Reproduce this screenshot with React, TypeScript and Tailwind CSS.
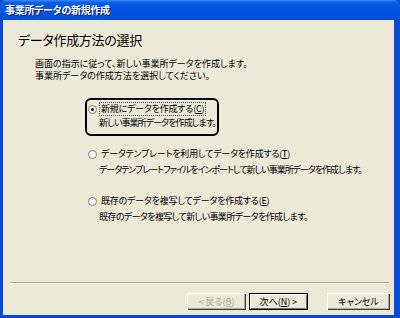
const jp = "font-['Noto_Sans_CJK_JP','Noto_Sans',sans-serif] [font-feature-settings:'palt']";

function Radio({ checked }: { checked?: boolean }) {
  return (
    <span className="w-[9px] h-[9px] rounded-full border border-[#7f7d76] bg-white flex items-center justify-center shrink-0">
      {checked && <span className="w-[3px] h-[3px] rounded-full bg-black" />}
    </span>
  );
}

function Option({
  label,
  k,
  desc,
  checked,
  descTrack = "tracking-[-0.6px]",
}: {
  label: string;
  k: string;
  desc: string;
  checked?: boolean;
  descTrack?: string;
}) {
  return (
    <div>
      <div className="flex items-center gap-[3px] h-[12px]">
        <Radio checked={checked} />
        <span
          className={`tracking-[-0.2px] px-[1px] leading-[12px] ${checked ? "outline outline-1 outline-dotted outline-[#555]" : ""}`}
        >
          {label}(<span className="underline">{k}</span>)
        </span>
      </div>
      <div className={`pl-[11px] h-[12px] leading-[12px] whitespace-nowrap ${descTrack} ${checked ? "mt-[2px]" : "mt-[4px]"}`}>
        {desc}
      </div>
    </div>
  );
}

function Button({ children, variant }: { children: React.ReactNode; variant?: "default" | "disabled" }) {
  const base = "h-[17px] flex items-center justify-center text-[9px] bg-[#ece9d8]";
  if (variant === "default")
    return (
      <div className={`${base} border border-black shadow-[inset_1px_1px_#fff,inset_-1px_-1px_#716f64]`}>
        {children}
      </div>
    );
  return (
    <div
      className={`${base} shadow-[inset_1px_1px_#fff,inset_-1px_-1px_#404040,inset_-2px_-2px_#aca899] ${variant === "disabled" ? "text-[#aca899]" : "text-black"}`}
    >
      {children}
    </div>
  );
}

export default function App() {
  return (
    <div className={`w-[400px] h-[318px] flex flex-col bg-[#0a49d6] ${jp}`}>
      {/* Title bar */}
      <div className="h-[20px] shrink-0 flex items-center pl-[5px] rounded-t-[6px] bg-[linear-gradient(180deg,#3d8bf7_0%,#0a5ee8_12%,#0054e3_45%,#0050e0_80%,#0a4ad0_100%)]">
        <span className="text-white font-bold text-[10px] tracking-[-0.3px] leading-none [text-shadow:1px_1px_#0a1e6e]">
          事業所データの新規作成
        </span>
      </div>

      {/* Body */}
      <div className="flex-1 flex flex-col ml-[3px] mr-[6px] mb-[3px] bg-[#ece9d8] text-black">
        <div className="flex-1">
          <div className="mt-[12px] ml-[15px] text-[13px] tracking-[-0.3px] leading-[16px]">データ作成方法の選択</div>
          <div className="mt-[10px] ml-[32px] text-[9px] leading-[12px]">
            <div>画面の指示に従って、新しい事業所データを作成します。</div>
            <div>事業所データの作成方法を選択してください。</div>
          </div>

          <div className="text-[9px]">
            <div className="mt-[16px] ml-[82px] w-[134px] border-2 border-black rounded-[6px] pl-[1px] pt-[3px] pb-[5px]">
              <Option
                checked
                label="新規にデータを作成する"
                k="C"
                descTrack="tracking-[-0.9px]"
                desc="新しい事業所データを作成します。"
              />
            </div>
            <div className="mt-[12px] ml-[85px]">
              <Option
                label="データテンプレートを利用してデータを作成する"
                k="T"
                descTrack="tracking-[-1px]"
                desc="データテンプレートファイルをインポートして新しい事業所データを作成します。"
              />
            </div>
            <div className="mt-[19px] ml-[85px]">
              <Option
                label="既存のデータを複写してデータを作成する"
                k="E"
                desc="既存のデータを複写して新しい事業所データを作成します。"
              />
            </div>
          </div>
        </div>

        {/* Footer */}
        <div className="ml-[7px] mr-[5px] h-[2px] border-t border-[#aca899] border-b border-b-white" />
        <div className="flex items-center justify-end mt-[9px] mb-[5px] pr-[4px]">
          <div className="w-[59px]">
            <Button variant="disabled">
              &lt; 戻る(<span className="underline">B</span>)
            </Button>
          </div>
          <div className="w-[59px] ml-[3px]">
            <Button variant="default">
              次へ(<span className="underline">N</span>) &gt;
            </Button>
          </div>
          <div className="w-[63px] ml-[19px]">
            <Button>キャンセル</Button>
          </div>
        </div>
      </div>
    </div>
  );
}
